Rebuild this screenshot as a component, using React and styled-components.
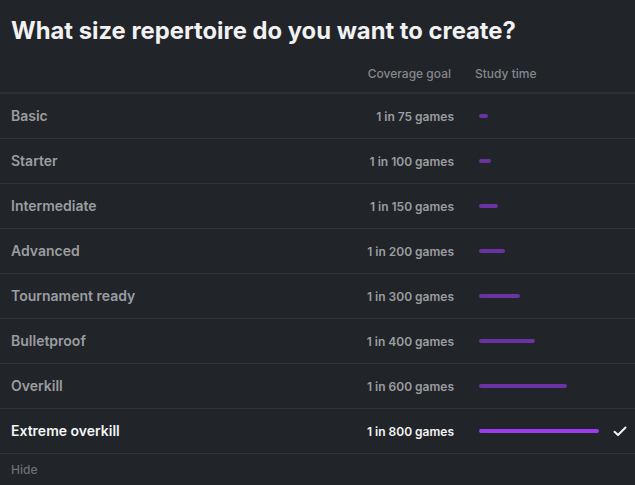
import React from "react";
import styled, { createGlobalStyle } from "styled-components";

const Global = createGlobalStyle`
  html, body { margin: 0; padding: 0; background: #212428; }
  body { font-family: Inter, "Noto Sans", sans-serif; -webkit-font-smoothing: antialiased; }
`;

const Page = styled.div`
  width: 635px;
  height: 485px;
  background: #212428;
  overflow: hidden;
`;

const Title = styled.h1`
  margin: 0;
  padding: 15px 11px 0;
  font-size: 23.8px;
  line-height: 32px;
  font-weight: 700;
  color: #f1f1f2;
`;

const Grid = styled.div`
  display: grid;
  grid-template-columns: 1fr 115px 159px 22px;
  padding: 0 0 0 11px;
  align-items: center;
`;

const HeaderRow = styled(Grid)`
  height: 33px;
  margin-top: 10px;
  padding-bottom: 2px;
  border-bottom: 2px solid #2c2f33;
`;

const HeadCell = styled.div`
  font-size: 12px;
  font-weight: 500;
  color: #85888d;
  text-align: ${(p) => (p.$right ? "right" : "left")};
  margin-right: ${(p) => (p.$right ? "3px" : "0")};
  padding-left: ${(p) => (p.$study ? "21px" : "0")};
`;

const Row = styled(Grid)`
  height: 44px;
  border-bottom: 1px solid #303338;
`;

const Label = styled.div`
  font-size: 14px;
  font-weight: 600;
  margin-top: -1px;
  color: ${(p) => (p.$active ? "#f4f4f5" : "#9b9da1")};
`;

const Goal = styled.div`
  font-size: 12px;
  font-weight: 600;
  text-align: right;
  color: ${(p) => (p.$active ? "#f4f4f5" : "#9b9da1")};
`;

const Study = styled.div`
  padding-left: 25px;
`;

const Bar = styled.div`
  height: 4px;
  border-radius: 2px;
  background: ${(p) => (p.$active ? "#9a3bef" : "#6a32a3")};
`;

const Check = styled.div`
  display: flex;
  align-items: center;
`;

const Hide = styled.div`
  padding: 8px 11px;
  font-size: 12px;
  font-weight: 500;
  color: #6c6f74;
`;

const rows = [
  ["Basic", "1 in 75 games", 9],
  ["Starter", "1 in 100 games", 12],
  ["Intermediate", "1 in 150 games", 19],
  ["Advanced", "1 in 200 games", 26],
  ["Tournament ready", "1 in 300 games", 41],
  ["Bulletproof", "1 in 400 games", 56],
  ["Overkill", "1 in 600 games", 88],
  ["Extreme overkill", "1 in 800 games", 120],
];

export default function App() {
  return (
    <Page>
      <Global />
      <Title>What size repertoire do you want to create?</Title>
      <HeaderRow>
        <div />
        <HeadCell $right>Coverage goal</HeadCell>
        <HeadCell $study>Study time</HeadCell>
        <div />
      </HeaderRow>
      {rows.map(([name, goal, w], i) => {
        const active = i === rows.length - 1;
        return (
          <Row key={name}>
            <Label $active={active}>{name}</Label>
            <Goal $active={active}>{goal}</Goal>
            <Study>
              <Bar $active={active} style={{ width: `${w}px` }} />
            </Study>
            <Check>
              {active && (
                <svg width="14" height="11" viewBox="0 0 14 11" fill="none">
                  <path d="M1.5 5.8 L5 9 L12.5 1.5" stroke="#f4f4f5" strokeWidth="2" strokeLinecap="round" strokeLinejoin="round" />
                </svg>
              )}
            </Check>
          </Row>
        );
      })}
      <Hide>Hide</Hide>
    </Page>
  );
}
